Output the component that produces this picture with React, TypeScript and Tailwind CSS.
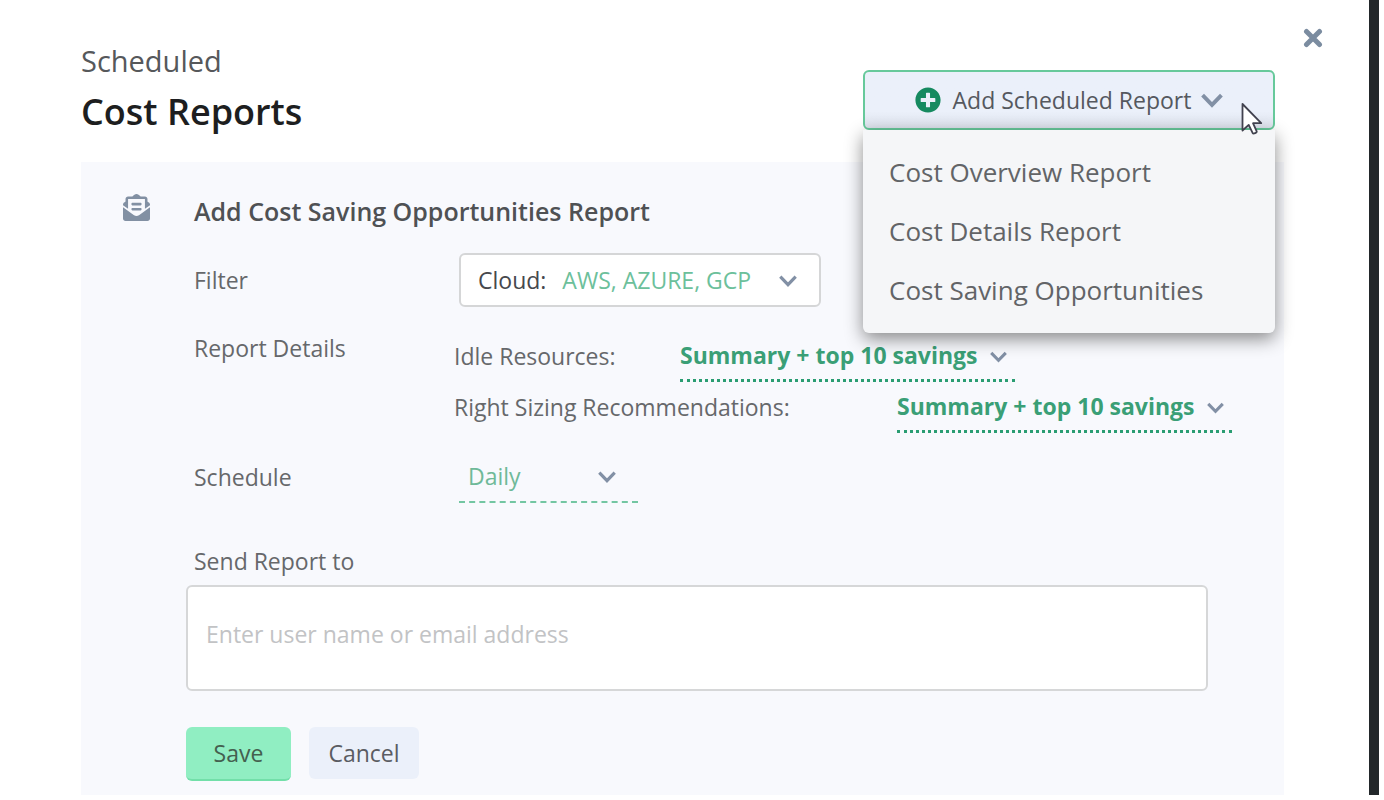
import React, { useState } from 'react';
import { FaPlusCircle, FaEnvelopeOpenText } from 'react-icons/fa';

const REPORT_TYPES = ['Cost Overview Report', 'Cost Details Report', 'Cost Saving Opportunities'];
const DETAIL_LEVELS = ['Summary + top 10 savings', 'Summary only', 'All savings'];
const INTERVALS = ['Daily', 'Weekly', 'Monthly'];
const CLOUDS = ['AWS, AZURE, GCP', 'AWS', 'AZURE', 'GCP'];

function Chevron({ className }: { className: string }) {
  return (
    <svg viewBox="0 0 18 12" fill="none" stroke="#8290a5" strokeWidth="3.2" className={className} aria-hidden="true">
      <path d="M1.3 1.6 9 9.6l7.7-8" />
    </svg>
  );
}

interface DetailSelectProps {
  id: string;
  label: string;
  labelClass: string;
}

function DetailSelect({ id, label, labelClass }: DetailSelectProps) {
  return (
    <div className="flex h-[51px]">
      <label htmlFor={id} className={`shrink-0 leading-[51px] ${labelClass}`}>
        {label}
      </label>
      <div className="relative">
        <select
          id={id}
          className="h-full w-[335px] appearance-none border-b-3 border-dotted border-[#2a9d72] font-bold text-[#3a9f76] outline-none"
        >
          {DETAIL_LEVELS.map(level => (
            <option key={level}>{level}</option>
          ))}
        </select>
        <Chevron className="pointer-events-none absolute right-2 top-5 h-3 w-[17px]" />
      </div>
    </div>
  );
}

export default function App() {
  const [menuOpen, setMenuOpen] = useState(true);
  const [recipients, setRecipients] = useState('');

  return (
    <div className="flex min-h-screen bg-white pb-[5px] pr-[5px] font-['Open_Sans',sans-serif] text-[23px] text-[#66686b]">
      <main className="flex flex-1 flex-col">
        {/* Title, report menu and close button */}
        <header className="flex items-start pl-[81px] pr-[46px]">
          <div className="flex-1 pb-5 pt-10">
            <p className="text-[29px] leading-[42px] text-[#56585b]">Scheduled</p>
            <h1 className="text-[36px] font-semibold leading-[60px] text-[#1d1e20]">Cost Reports</h1>
          </div>

          <div className="relative mt-[70px]">
            <button
              type="button"
              aria-expanded={menuOpen}
              onClick={() => setMenuOpen(!menuOpen)}
              className="flex h-[60px] w-[412px] items-center justify-center rounded-md border-2 border-[#67c99b] bg-linear-to-b from-[#ebf0fa] from-70% to-[#dde2ec] text-[#55585f]"
            >
              <FaPlusCircle className="mr-3 size-[26px] text-[#168a60]" />
              Add Scheduled Report
              <Chevron className="ml-2.5 h-[15px] w-[22px]" />
            </button>

            {menuOpen && (
              <ul className="absolute inset-x-0 top-full z-10 rounded-b-md bg-[#f5f6f8] py-[13px] shadow-[0_6px_18px_rgba(0,0,0,0.45)]">
                {REPORT_TYPES.map(type => (
                  <li key={type}>
                    <button
                      type="button"
                      onClick={() => setMenuOpen(false)}
                      className="h-[59px] w-full px-[26px] text-left text-[26px] text-[#626467]"
                    >
                      {type}
                    </button>
                  </li>
                ))}
              </ul>
            )}

            {/* Pointer */}
            <svg viewBox="0 0 22 34" className="pointer-events-none absolute right-3 top-8 z-20 h-[34px] w-[22px]" aria-hidden="true">
              <path
                d="M1.5 2v26.5l6.2-5.6 4 8.2c.6 1.2 4.6-.4 4-1.8l-3.7-8.1h8.2z"
                fill="#fff"
                stroke="#41424f"
                strokeWidth="1.8"
                strokeLinejoin="round"
              />
            </svg>
          </div>

          <button type="button" aria-label="Close" className="ml-7 mt-7">
            <svg viewBox="0 0 20 20" className="size-5" fill="none" stroke="#7b8ca0" strokeWidth="5" strokeLinecap="round">
              <path d="M3.5 3.5l13 13M16.5 3.5l-13 13" />
            </svg>
          </button>
        </header>

        {/* Report form */}
        <section className="ml-[81px] mr-[85px] flex flex-1 items-start bg-[#f8f9fd] pl-[42px] pr-[52px]">
          <FaEnvelopeOpenText className="mt-8 size-[27px] shrink-0 text-[#8290a3]" />

          <form className="ml-9 flex-1 pb-3.5 pt-[31px]" onSubmit={e => e.preventDefault()}>
            <h2 className="pl-2 text-[25px] font-semibold leading-9 text-[#4f5154]">Add Cost Saving Opportunities Report</h2>

            <div className="mt-6 flex items-center">
              <label htmlFor="cloud" className="w-[273px] pl-2">
                Filter
              </label>
              <div className="relative flex h-[54px] w-[362px] items-center rounded-md border-2 border-[#d5d6d7] bg-white pl-[17px]">
                <span className="text-[#46484d]">Cloud:</span>
                <select id="cloud" className="ml-4 h-full flex-1 appearance-none text-[#6cc09b] outline-none">
                  {CLOUDS.map(cloud => (
                    <option key={cloud}>{cloud}</option>
                  ))}
                </select>
                <Chevron className="pointer-events-none absolute right-[22px] top-5 h-3 w-[18px]" />
              </div>
            </div>

            <div className="mt-6 flex items-start">
              <span className="w-[268px] pl-2 leading-[34px]">Report Details</span>
              <div>
                <DetailSelect id="idle" label="Idle Resources:" labelClass="w-[226px]" />
                <DetailSelect id="sizing" label="Right Sizing Recommendations:" labelClass="w-[443px]" />
              </div>
            </div>

            <div className="mt-[18px] flex items-center">
              <label htmlFor="schedule" className="w-[273px] pl-2">
                Schedule
              </label>
              <div className="relative">
                <select
                  id="schedule"
                  className="h-[52px] w-[179px] appearance-none border-b-2 border-dashed border-[#73c6a2] pl-[9px] text-[#6fb999] outline-none"
                >
                  {INTERVALS.map(interval => (
                    <option key={interval}>{interval}</option>
                  ))}
                </select>
                <Chevron className="pointer-events-none absolute right-[22px] top-5 h-3 w-[18px]" />
              </div>
            </div>

            <div className="mt-[42px] pr-6">
              <label htmlFor="recipients" className="block pl-2 leading-8">
                Send Report to
              </label>
              <input
                id="recipients"
                type="text"
                value={recipients}
                onChange={e => setRecipients(e.target.value)}
                placeholder="Enter user name or email address"
                className="mt-2 h-[106px] w-full rounded-md border-2 border-[#d6d7d8] bg-white px-[18px] pb-2 outline-none placeholder:text-[#c2c3c5]"
              />
            </div>

            <div className="mt-9 flex items-start gap-[18px]">
              <button
                type="submit"
                className="h-[54px] w-[105px] rounded-md border-b-2 border-[#72dfa9] bg-[#90eec2] text-[#44604f]"
              >
                Save
              </button>
              <button type="button" className="h-[52px] w-[110px] rounded-md bg-[#ebf0fa] text-[#5a5c62]">
                Cancel
              </button>
            </div>
          </form>
        </section>
      </main>

      {/* Page edge behind the dialog */}
      <div className="w-2.5 bg-[#22272a]" />
    </div>
  );
}
